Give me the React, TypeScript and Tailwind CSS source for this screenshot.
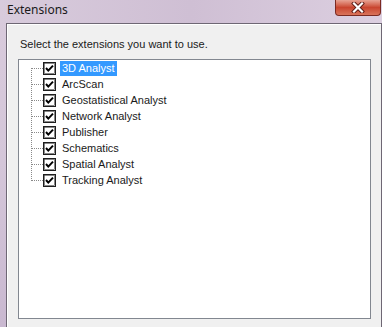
import React from "react";

const items = [
  "3D Analyst",
  "ArcScan",
  "Geostatistical Analyst",
  "Network Analyst",
  "Publisher",
  "Schematics",
  "Spatial Analyst",
  "Tracking Analyst",
];

function Connector({ first, last }: { first: boolean; last: boolean }) {
  return (
    <svg width="12" height="16" viewBox="0 0 12 16" className="shrink-0">
      <line
        x1="0.5"
        y1={first ? 8 : 0}
        x2="0.5"
        y2={last ? 9 : 16}
        stroke="#8a8a8a"
        strokeWidth="1"
        strokeDasharray="1 1"
      />
      <line x1="1" y1="8.5" x2="12" y2="8.5" stroke="#8a8a8a" strokeWidth="1" strokeDasharray="1 1" />
    </svg>
  );
}

function CheckBox() {
  return (
    <svg width="13" height="13" viewBox="0 0 13 13" className="shrink-0">
      <rect x="0.5" y="0.5" width="12" height="12" fill="#ffffff" stroke="#1e1e1e" />
      <rect x="1.5" y="1.5" width="10" height="10" fill="none" stroke="#3a3a3a" strokeWidth="0.6" />
      <polyline points="3,6 5.3,8.6 10,3.6" fill="none" stroke="#000" strokeWidth="2" />
    </svg>
  );
}

export default function App() {
  return (
    <div
      className="w-[382px] h-[327px] overflow-hidden flex flex-col bg-gradient-to-b from-[#d9cbdc] via-[#d4c6d9] to-[#c9b8d0]"
      style={{ fontFamily: '"Liberation Sans", Arial, sans-serif' }}
    >
      {/* Title bar */}
      <div className="h-[23px] shrink-0 flex items-start justify-between bg-gradient-to-r from-[#d8cbdc] via-[#cfbfd4] to-[#dccfe0]">
        <span
          className="pl-[7px] pt-[2px] text-[12px] leading-[16px] text-[#1a1a1a]"
          style={{ fontFamily: '"Noto Sans", "Open Sans", sans-serif' }}
        >
          Extensions
        </span>
        <div className="mr-[1px] w-[46px] h-[16px] rounded-b-[4px] border border-t-0 border-[#7b2a22] bg-gradient-to-b from-[#e7a394] via-[#c9452f] to-[#d9735a] flex items-center justify-center">
          <svg width="14" height="11" viewBox="0 0 14 11">
            <path d="M3 1.5 L11 9.5 M11 1.5 L3 9.5" stroke="#5a1a14" strokeWidth="4" strokeLinecap="square" />
            <path d="M3 1.5 L11 9.5 M11 1.5 L3 9.5" stroke="#ffffff" strokeWidth="2.2" strokeLinecap="square" />
          </svg>
        </div>
      </div>

      {/* Body with frame */}
      <div className="flex-1 flex pl-[6px]">
        <div className="flex-1 border-l border-t border-r border-[#6e6774] bg-[#f0f0f0] flex flex-col">
          <div className="border-l border-t border-white flex-1 flex flex-col pl-[10px] mr-[0px]">
            <div className="pl-[2px] pt-[13px] h-[34px] text-[11px] leading-[13px] text-[#1a1a1a]">
              Select the extensions you want to use.
            </div>
            <div className="w-[353px] h-[260px] border border-[#828790] bg-white">
              <div className="flex flex-col pl-[12px]">
                {items.map((label, i) => (
                  <div key={label} className="h-[16px] flex items-center">
                    <Connector first={i === 0} last={i === items.length - 1} />
                    <CheckBox />
                    <span
                      className={
                        i === 0
                          ? "ml-[4px] px-[2px] h-[15px] leading-[15px] text-[11px] bg-[#3399ff] text-white"
                          : "ml-[4px] px-[2px] h-[15px] leading-[15px] text-[11px] text-[#1a1a1a]"
                      }
                    >
                      {label}
                    </span>
                  </div>
                ))}
              </div>
            </div>
          </div>
        </div>
      </div>
    </div>
  );
}
